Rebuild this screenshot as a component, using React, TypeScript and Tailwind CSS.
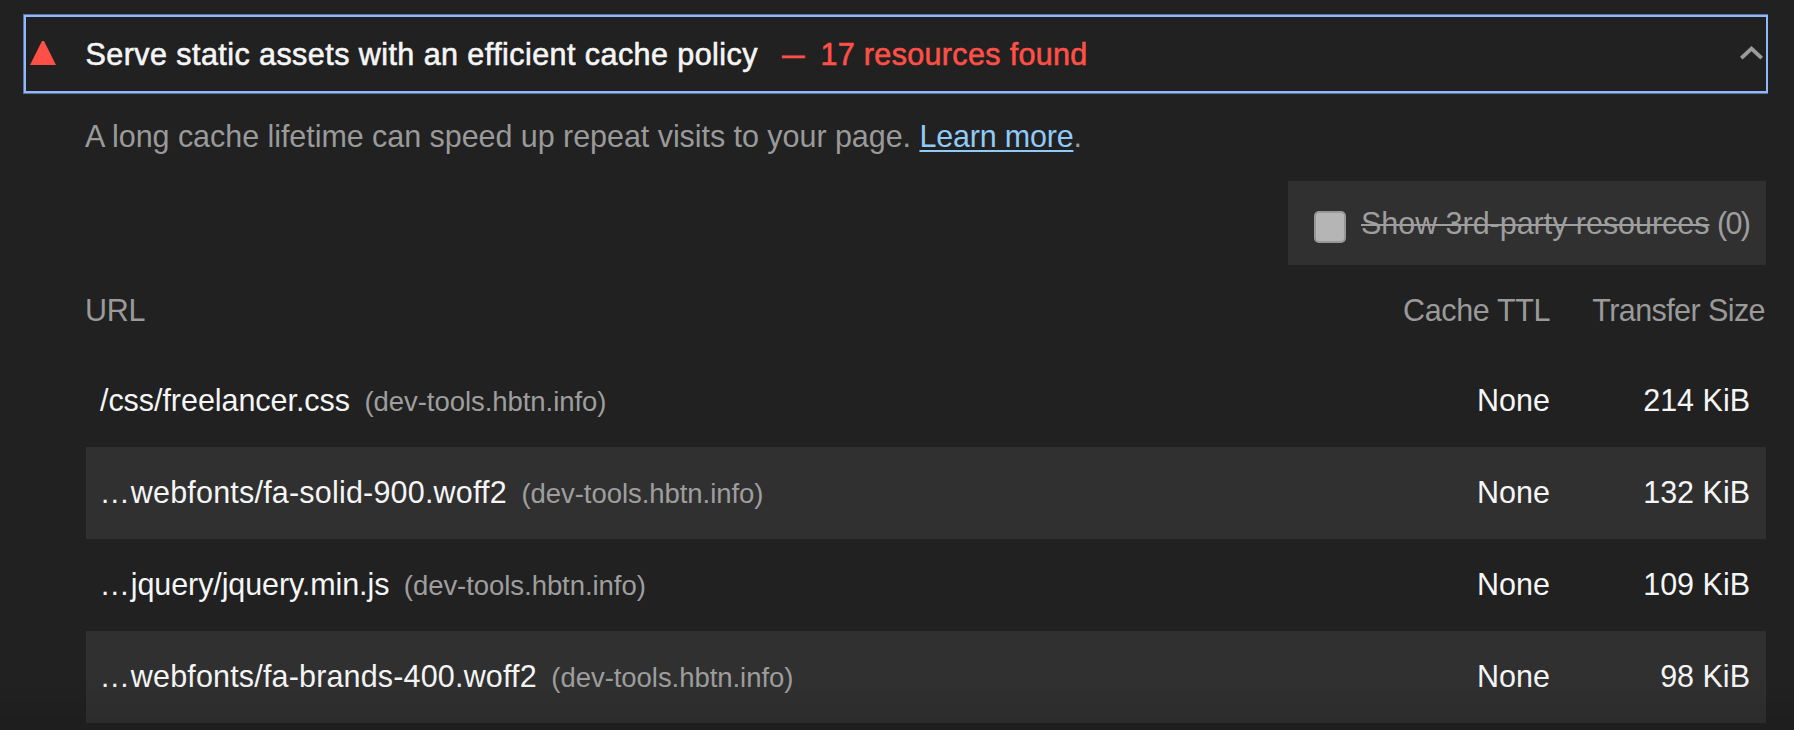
type Resource = {
  prefix?: string;
  path: string;
  tracking: string;
  host: string;
  ttl: string;
  size: string;
};

const resources: Resource[] = [
  { path: "/css/freelancer.css", tracking: "tracking-[-0.05px]", host: "dev-tools.hbtn.info", ttl: "None", size: "214 KiB" },
  { prefix: "…", path: "webfonts/fa-solid-900.woff2", tracking: "tracking-[0.2px]", host: "dev-tools.hbtn.info", ttl: "None", size: "132 KiB" },
  { prefix: "…", path: "jquery/jquery.min.js", tracking: "tracking-[-0.1px]", host: "dev-tools.hbtn.info", ttl: "None", size: "109 KiB" },
  { prefix: "…", path: "webfonts/fa-brands-400.woff2", tracking: "tracking-[0.17px]", host: "dev-tools.hbtn.info", ttl: "None", size: "98 KiB" },
];

function AuditHeader() {
  return (
    <header className="mr-[26px] ml-[23px] border-y border-l border-[#5b759f]">
      <div className="flex h-[78px] items-center border-2 border-[#90b8fa] pr-[3px] pl-[4px]">
        <svg className="-mt-[2px] h-6 w-[26px] shrink-0" viewBox="0 0 26 24" fill="#ff5047">
          <path d="M12 0h2l12 24H0z" />
        </svg>
        <h1 className="ml-[29.5px] tracking-[0.44px] text-[#f5f5f5] [-webkit-text-stroke:0.6px_#f5f5f5]">
          Serve static assets with an efficient cache policy
        </h1>
        <p className="ml-[24.5px] flex text-[#ff5047] [-webkit-text-stroke:0.6px_#ff5047]">
          <span className="w-[22.5px] origin-left scale-x-[0.74]">—</span>
          <span className="ml-[15.5px] tracking-[0.34px]">17 resources found</span>
        </p>
        <svg className="-mt-[3px] ml-auto h-[14px] w-[23px] shrink-0" viewBox="0 0 23 14" fill="none" stroke="#9b9b9b" strokeWidth="3.8">
          <path d="M1.3 12.2 11.5 2.6l10.2 9.6" />
        </svg>
      </div>
    </header>
  );
}

function ThirdPartyFilter() {
  return (
    <label className="ml-auto flex h-[84px] w-[478px] items-center bg-[#303030] pl-[26px] text-[#9e9e9e]">
      <span className="mt-[8px] size-8 rounded-[5px] border-2 border-[#989898] bg-[#b5b5b5]" />
      <span className="ml-[15px] tracking-[-0.03px] line-through decoration-2">Show 3rd-party resources</span>
      <span className="ml-[7.5px] tracking-[-1.7px]">(0)</span>
    </label>
  );
}

function ResourceRow({ item }: { item: Resource }) {
  return (
    <div className="flex h-[92px] items-baseline pr-[16px] pl-[14px] leading-[90px] text-[#f5f5f5] even:bg-[#303030]">
      {item.prefix && <span className="-ml-[0.5px] tracking-[0.8px]">{item.prefix}</span>}
      <span className={item.tracking}>{item.path}</span>
      <span className="ml-[14.5px] text-[27.5px] tracking-[-0.05px] text-[#9e9e9e]">({item.host})</span>
      <span className="ml-auto">{item.ttl}</span>
      <span className="w-[200px] text-right">{item.size}</span>
    </div>
  );
}

export default function App() {
  return (
    <main className="relative h-[730px] w-full overflow-hidden bg-[#212121] pt-[14px] font-['Liberation_Sans',Arial,sans-serif] text-[30.5px] leading-10 whitespace-nowrap">
      <AuditHeader />
      <section className="mr-[28px] ml-[86px] flex flex-col">
        <p className="mt-[22px] -ml-px h-10 tracking-[-0.05px] text-[#9a9a9a]">
          A long cache lifetime can speed up repeat visits to your page.{" "}
          <a href="#learn-more" className="tracking-[-0.2px] text-[#90caf9] underline decoration-2 underline-offset-[3px]">
            Learn more
          </a>
          .
        </p>
        <div className="mt-[25px] flex">
          <ThirdPartyFilter />
        </div>
        <div className="flex h-[90px] items-center pr-px text-[#9a9a9a]">
          <span className="-ml-px tracking-[-0.3px]">URL</span>
          <span className="ml-auto tracking-[-0.38px]">Cache TTL</span>
          <span className="w-[215px] text-right tracking-[-0.58px]">Transfer Size</span>
        </div>
        <div className="flex flex-col">
          {resources.map((item) => (
            <ResourceRow key={item.path} item={item} />
          ))}
        </div>
      </section>
      <div className="pointer-events-none absolute inset-x-0 bottom-0 h-14 bg-linear-to-b from-transparent to-black/10" />
    </main>
  );
}
